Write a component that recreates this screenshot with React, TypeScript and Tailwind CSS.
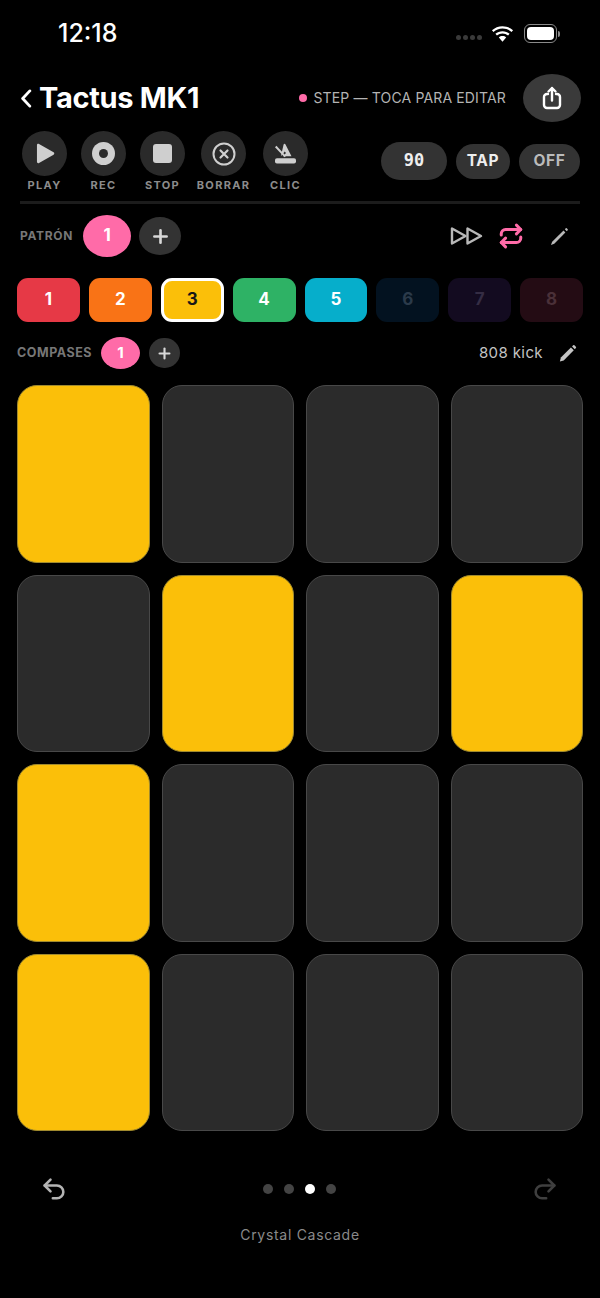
import React from 'react';
import { Plus, Repeat, Redo2, Undo2 } from 'lucide-react';

const tracks = [
  { n: 1, bg: 'bg-[#e63946]', text: 'text-white', ring: '' },
  { n: 2, bg: 'bg-[#f97316]', text: 'text-white', ring: '' },
  { n: 3, bg: 'bg-[#fbbf09]', text: 'text-[#171717]', ring: 'border-[3px] border-white' },
  { n: 4, bg: 'bg-[#2eb265]', text: 'text-white', ring: '' },
  { n: 5, bg: 'bg-[#06aecb]', text: 'text-white', ring: '' },
  { n: 6, bg: 'bg-[#031220]', text: 'text-[#2b3a4a]', ring: '' },
  { n: 7, bg: 'bg-[#130b20]', text: 'text-[#352d44]', ring: '' },
  { n: 8, bg: 'bg-[#240c14]', text: 'text-[#4a3038]', ring: '' },
];

const pads = [
  1, 0, 0, 0,
  0, 1, 0, 1,
  1, 0, 0, 0,
  1, 0, 0, 0,
];

const Pencil = ({ className }: { className?: string }) => (
  <svg viewBox="0 0 20 20" className={className} fill="currentColor">
    <path d="M2 18.500l1-4.200L13.600 3.700l3 3L6 17.300z" />
    <path d="M14.800 2.500l1.100-1.100a1 1 0 0 1 1.400 0l1.500 1.500a1 1 0 0 1 0 1.400l-1.100 1.100z" />
  </svg>
);

const SlimPencil = ({ className }: { className?: string }) => (
  <svg viewBox="0 0 20 20" className={className} fill="currentColor">
    <path d="M1 19l1.300-3.600L14.200 3.800l2 2L4.500 17.700z" />
    <path d="M15.600 2.400l1-1a.8.8 0 0 1 1.100 0l.9.900a.8.8 0 0 1 0 1.100l-1 1z" />
  </svg>
);

const Transport = ({ label, className, children }: { label: string; className?: string; children: React.ReactNode }) => (
  <div className={`flex w-[45px] flex-col items-center ${className ?? ''}`}>
    <div className="flex h-[45px] w-[45px] items-center justify-center rounded-full bg-[#2a2a2a] text-[#cfcfcf]">
      {children}
    </div>
    <span className="mt-[2px] whitespace-nowrap text-[11px] leading-[14px] font-bold tracking-[1.3px] text-[#8c8c8c]">
      {label}
    </span>
  </div>
);

export default function App() {
  return (
    <div className="flex h-[1298px] w-[600px] flex-col overflow-hidden bg-black font-['Inter',sans-serif] text-white">
      {/* Status bar */}
      <div className="flex h-[74px] items-start justify-between pt-[19px] pr-[40px] pl-[58px]">
        <span className="text-[25px] leading-[29px] font-medium">12:18</span>
        <div className="flex items-center pt-[5px]">
          <div className="mt-[8px] mr-[9px] flex gap-[2px]">
            <div className="h-[5px] w-[5px] rounded-full bg-[#3a3a3a]" />
            <div className="h-[5px] w-[5px] rounded-full bg-[#3a3a3a]" />
            <div className="h-[5px] w-[5px] rounded-full bg-[#3a3a3a]" />
            <div className="h-[5px] w-[5px] rounded-full bg-[#3a3a3a]" />
          </div>
          <svg viewBox="0 0 24 18" className="mr-[10px] h-[18px] w-[23px]" fill="white">
            <path d="M12 3.200c3.600 0 6.900 1.400 9.400 3.700l1.600-1.800C20.100 2.400 16.200.8 12 .8S3.900 2.400 1 5.100l1.600 1.800C5.100 4.600 8.400 3.200 12 3.200z" />
            <path d="M12 8.400c2.200 0 4.200.8 5.800 2.200l1.600-1.800C17.400 7 14.800 6 12 6S6.600 7 4.600 8.800l1.600 1.800C7.800 9.200 9.800 8.400 12 8.400z" />
            <path d="M12 11.200c-1.500 0-2.800.5-3.800 1.400L12 17l3.800-4.400c-1-.9-2.300-1.400-3.800-1.400z" />
          </svg>
          <div className="flex items-center">
            <div className="h-[19px] w-[33px] rounded-[6px] border border-[#8a8a8a] p-[2px]">
              <div className="h-full w-full rounded-[4px] bg-white" />
            </div>
            <div className="ml-[1px] h-[6px] w-[2px] rounded-r-full bg-[#8a8a8a]" />
          </div>
        </div>
      </div>

      {/* Header */}
      <div className="flex h-[48px] items-center pr-[19px] pl-[20px]">
        <svg viewBox="0 0 12 20" className="h-[19px] w-[12px]" fill="none" stroke="white" strokeWidth="3" strokeLinecap="round" strokeLinejoin="round">
          <path d="M10 2 2.500 10 10 18" />
        </svg>
        <span className="ml-[7px] text-[29px] leading-[36px] font-bold tracking-[-0.3px]">Tactus MK1</span>
        <div className="ml-auto flex items-center">
          <div className="h-[8px] w-[8px] rounded-full bg-[#ff6ba8]" />
          <span className="ml-[6px] text-[14px] leading-[18px] tracking-[0.15px] text-[#b4b4b4]">STEP — TOCA PARA EDITAR</span>
        </div>
        <div className="ml-[17px] flex h-[48px] w-[58px] items-center justify-center rounded-[50%] bg-[#3a3a3a]">
          <svg viewBox="0 0 20 24" className="h-[24px] w-[20px]" fill="none" stroke="white" strokeWidth="2.400" strokeLinecap="round" strokeLinejoin="round">
            <path d="M10 14.500V2M6.500 5.500 10 2l3.500 3.500" />
            <path d="M6 8H5a3 3 0 0 0-3 3v8a3 3 0 0 0 3 3h10a3 3 0 0 0 3-3v-8a3 3 0 0 0-3-3h-1" />
          </svg>
        </div>
      </div>

      {/* Transport */}
      <div className="mt-[9px] flex h-[60px] items-start pr-[20px] pl-[22px]">
        <div className="flex">
          <Transport label="PLAY">
            <svg viewBox="0 0 20 22" className="ml-[1px] h-[21px] w-[19px]" fill="currentColor">
              <path d="M1 2.200C1 1 2.200.4 3.200 1l15.300 8.800c1 .5 1 1.900 0 2.400L3.200 21C2.200 21.600 1 21 1 19.800z" />
            </svg>
          </Transport>
          <Transport label="REC" className="ml-[14px]">
            <div className="flex h-[23px] w-[23px] items-center justify-center rounded-full bg-[#cfcfcf]">
              <div className="h-[9px] w-[9px] rounded-full bg-[#2a2a2a]" />
            </div>
          </Transport>
          <Transport label="STOP" className="ml-[14px]">
            <div className="h-[19px] w-[19px] rounded-[3px] bg-[#cfcfcf]" />
          </Transport>
          <Transport label="BORRAR" className="ml-[16px]">
            <svg viewBox="0 0 24 24" className="h-[24px] w-[24px]" fill="none" stroke="currentColor" strokeWidth="2" strokeLinecap="round">
              <circle cx="12" cy="12" r="10.500" />
              <path d="M8.500 8.500l7 7M15.500 8.500l-7 7" strokeWidth="2.200" />
            </svg>
          </Transport>
          <Transport label="CLIC" className="ml-[17px]">
            <svg viewBox="0 0 24 22" className="h-[21px] w-[23px]" fill="currentColor">
              <path d="M10 1.500c.4-1 1.600-1 2 0l6.300 12.500H9.500l3-3.500-1.300-1.500-4 5z" />
              <path d="M2.500 3 1 4.500 11 15l1.500-1.500z" />
              <rect x="1" y="16" width="22" height="5.500" rx="2" />
            </svg>
          </Transport>
        </div>
        <div className="mt-[11px] ml-auto flex items-center gap-[9px] text-[15.5px] font-bold">
          <div className="flex h-[38px] w-[66px] items-center justify-center rounded-full bg-[#333333] font-['DejaVu_Sans_Mono',monospace] text-[17px] text-[#eeeeee]">90</div>
          <div className="flex h-[35px] w-[54px] items-center justify-center rounded-full bg-[#333333] tracking-[0.6px] text-[#eeeeee]">TAP</div>
          <div className="flex h-[35px] w-[61px] items-center justify-center rounded-full bg-[#333333] tracking-[0.6px] text-[#bbbbbb]">OFF</div>
        </div>
      </div>

      <div className="mx-[20px] mt-[10px] h-[3px] bg-[#1c1c1c]" />

      {/* Pattern */}
      <div className="mt-[11px] flex h-[42px] items-center pr-[31px] pl-[20px]">
        <span className="text-[12px] font-bold tracking-[0.7px] text-[#777777]">PATRÓN</span>
        <div className="ml-[10px] flex h-[42px] w-[48px] items-center justify-center rounded-[50%] bg-[#ff6ba8] text-[17px] font-bold">1</div>
        <div className="ml-[8px] flex h-[38px] w-[42px] items-center justify-center rounded-[50%] bg-[#333333] text-[#d8d8d8]">
          <Plus size={21} strokeWidth={3} />
        </div>
        <div className="ml-auto flex items-center">
          <svg viewBox="0 0 33 20" className="h-[20px] w-[33px]" fill="none" stroke="#b8b8b8" strokeWidth="2.400" strokeLinejoin="round">
            <path d="M2 2.500v15L15.500 10z" />
            <path d="M17.500 2.500v15L31 10z" />
          </svg>
          <Repeat size={26} strokeWidth={2.800} className="ml-[15px] text-[#ff6ba8]" />
          <SlimPencil className="ml-[26px] h-[19px] w-[19px] text-[#b8b8b8]" />
        </div>
      </div>

      {/* Track selector */}
      <div className="mt-[21px] grid grid-cols-8 gap-[9px] px-[17px]">
        {tracks.map((t) => (
          <div
            key={t.n}
            className={`flex h-[44px] items-center justify-center rounded-[11px] text-[17px] font-bold ${t.bg} ${t.text} ${t.ring}`}
          >
            {t.n}
          </div>
        ))}
      </div>

      {/* Bars */}
      <div className="mt-[15px] flex h-[32px] items-center pr-[23px] pl-[17px]">
        <span className="text-[12.5px] font-bold tracking-[0.55px] text-[#777777]">COMPASES</span>
        <div className="ml-[9px] flex h-[32px] w-[39px] items-center justify-center rounded-[50%] bg-[#ff6ba8] text-[15px] font-bold">1</div>
        <div className="ml-[9px] flex h-[30px] w-[31px] items-center justify-center rounded-full bg-[#333333] text-[#d8d8d8]">
          <Plus size={17} strokeWidth={3} />
        </div>
        <span className="ml-auto text-[15px] tracking-[0.4px] text-[#c4c4c4]">808 kick</span>
        <Pencil className="ml-[15px] h-[19px] w-[19px] text-[#c4c4c4]" />
      </div>

      {/* Pads */}
      <div className="mt-[16px] grid grid-cols-4 gap-[12px] px-[17px]">
        {pads.map((on, i) => (
          <div
            key={i}
            className={`h-[177.5px] rounded-[20px] border ${on ? 'border-[#a08a2e] bg-[#fbbf09]' : 'border-[#484848] bg-[#2b2b2b]'}`}
          />
        ))}
      </div>

      {/* Footer */}
      <div className="mt-[44px] flex h-[28px] items-center justify-between pr-[41px] pl-[40px]">
        <Undo2 size={28} strokeWidth={2.200} className="text-[#b4b4b4]" />
        <div className="flex items-center gap-[11px]">
          <div className="h-[10px] w-[10px] rounded-full bg-[#444444]" />
          <div className="h-[10px] w-[10px] rounded-full bg-[#444444]" />
          <div className="h-[10px] w-[10px] rounded-full bg-white" />
          <div className="h-[10px] w-[10px] rounded-full bg-[#444444]" />
        </div>
        <Redo2 size={28} strokeWidth={2.200} className="text-[#3f3f3f]" />
      </div>
      <div className="mt-[22px] text-center text-[14px] leading-[20px] tracking-[0.7px] text-[#8a8a8a]">Crystal Cascade</div>
    </div>
  );
}
